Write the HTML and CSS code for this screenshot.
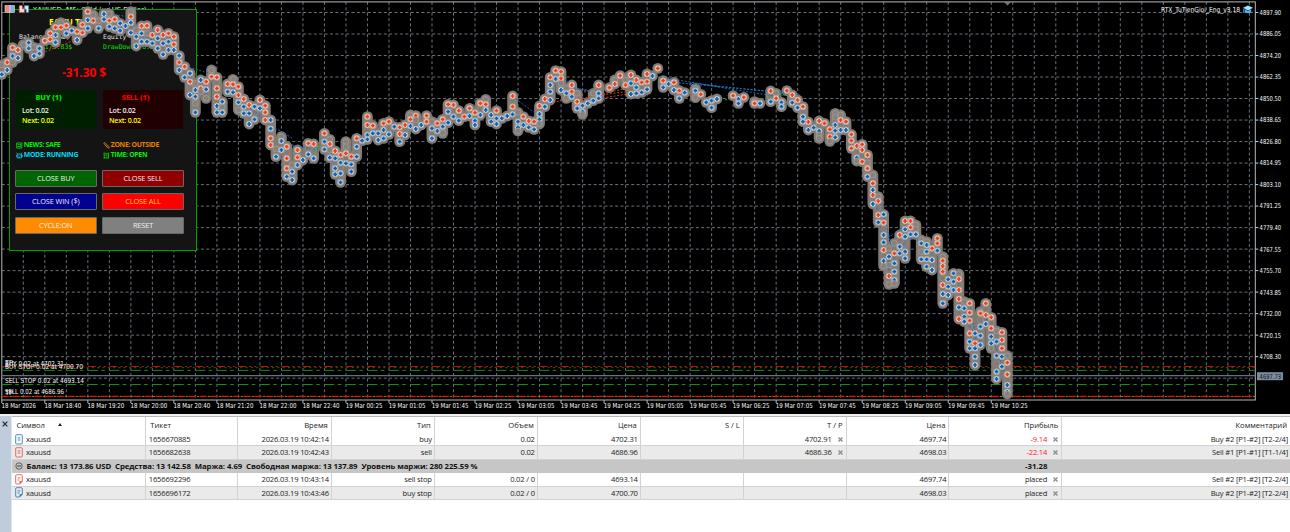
FILE: index.html
```html
<!DOCTYPE html>
<html lang="ru">
<head>
<meta charset="utf-8">
<title>XAUUSD, M5</title>
<link rel="stylesheet" href="styles.css">
</head>
<body>
<div class="terminal">
  <section class="chart">
    <svg class="layer" id="grid" width="1290" height="414"></svg>
    <div class="panel">
      <div class="panel-title">EA TU TIEN</div>
      <div class="pair mono"><span>Balance (USD)</span><span>Equity (USD)</span></div>
      <div class="pair mono green"><span class="balance-value">13173.83$</span><span>DrawDown: 0.2%</span></div>
      <div class="profit">-31.30 $</div>
      <div class="sides">
        <div class="side side-buy"><b>BUY (1)</b><span>Lot: 0.02</span><span class="next">Next: 0.02</span></div>
        <div class="side side-sell"><b>SELL (1)</b><span>Lot: 0.02</span><span class="next">Next: 0.02</span></div>
      </div>
      <div class="status">
        <span class="lime"><svg width="7" height="7" viewBox="0 0 7 7"><path d="M.7 1h5.1v5.1H.7zM1.7 2.5h2M1.7 4.5h3M4.7 2v2" /></svg>NEWS: SAFE</span>
        <span class="orange"><svg width="7" height="7" viewBox="0 0 7 7"><path d="M.7 1.2l1.4-.5L6 4.8l.1 1.4-1.4-.3zM2 2.6l2.5 2.6" /></svg>ZONE: OUTSIDE</span>
        <span class="cyan"><svg width="7" height="7" viewBox="0 0 7 7"><path d="M1.2 2.1h4.3v3.8H1.2zM.5.8l1.4 1.3M6.2.8L4.8 2.1M.3 3v2M6.3 3v2M2.3 3.4h.6M4 3.4h.6M2.3 5h2" /></svg>MODE: RUNNING</span>
        <span class="lime"><svg width="7" height="7" viewBox="0 0 7 7"><path d="M1.2 1.8h4.2v4.1H1.2zM.4 1.5L1.5.6M6.2 1.5L5.1.6M3.3 2.6v1.5h1M1 6.6l.6-.7M5.6 6.6L5 5.9" /></svg>TIME: OPEN</span>
      </div>
      <div class="buttons">
        <button class="btn b-green">CLOSE BUY</button><button class="btn b-maroon">CLOSE SELL</button>
        <button class="btn b-navy">CLOSE WIN ($)</button><button class="btn b-red">CLOSE ALL</button>
        <button class="btn b-orange">CYCLE:ON</button><button class="btn b-gray">RESET</button>
      </div>
    </div>
    <svg class="layer" id="deals" width="1290" height="414"></svg>
  </section>

  <section class="toolbox">
    <div class="strip"><svg width="6" height="6" viewBox="0 0 6 6"><path d="M.7.7l4.6 4.6M5.3.7L.7 5.3" stroke="#222" stroke-width="1.2"/></svg></div>
    <div class="table">
      <div class="row head">
        <span class="l">Символ<i class="sort"></i></span><span class="l">Тикет</span><span>Время</span><span>Тип</span><span>Объем</span><span>Цена</span><span>S / L</span><span>T / P</span><span>Цена</span><span>Прибыль</span><span>Комментарий</span>
      </div>
      <div class="row">
        <span class="l sym"><svg class="doc blue" width="8" height="11" viewBox="0 0 8 11"><rect x=".7" y=".7" width="6.6" height="9.3" rx="1"/><path d="M2.6 3.9h2.8M2.6 6h2.8"/></svg>xauusd</span><span class="l">1656670885</span><span>2026.03.19 10:42:14</span><span>buy</span><span>0.02</span><span>4702.31</span><span></span><span>4702.91<svg class="x" viewBox="0 0 5 5"><path d="M.5.5l4 4M4.5.5l-4 4"/></svg></span><span>4697.74</span><span class="loss">-9.14<svg class="x" viewBox="0 0 5 5"><path d="M.5.5l4 4M4.5.5l-4 4"/></svg></span><span>Buy #2 [P1-#2] [T2-2/4]</span>
      </div>
      <div class="row alt">
        <span class="l sym"><svg class="doc red" width="8" height="11" viewBox="0 0 8 11"><rect x=".7" y=".7" width="6.6" height="9.3" rx="1"/><path d="M2.6 3.9h2.8M2.6 6h2.8"/></svg>xauusd</span><span class="l">1656682638</span><span>2026.03.19 10:42:43</span><span>sell</span><span>0.02</span><span>4686.96</span><span></span><span>4686.36<svg class="x" viewBox="0 0 5 5"><path d="M.5.5l4 4M4.5.5l-4 4"/></svg></span><span>4698.03</span><span class="loss">-22.14<svg class="x" viewBox="0 0 5 5"><path d="M.5.5l4 4M4.5.5l-4 4"/></svg></span><span>Sell #1 [P1-#1] [T1-1/4]</span>
      </div>
      <div class="summary">
        <svg width="8" height="8" viewBox="0 0 8 8"><circle cx="4" cy="4" r="3.2" fill="none" stroke="#444" stroke-width=".8"/><path d="M2.2 4h3.6" stroke="#333"/></svg>
        <span class="totals">Баланс: 13 173.86 USD&nbsp; Средства: 13 142.58&nbsp; Маржа: 4.69&nbsp; Свободная маржа: 13 137.89&nbsp; Уровень маржи: 280 225.59 %</span>
        <span class="net">-31.28</span>
      </div>
      <div class="row">
        <span class="l sym"><svg class="doc red" width="8" height="11" viewBox="0 0 8 11"><path d="M4.5 10H1.7a1 1 0 0 1-1-1V1.7a1 1 0 0 1 1-1h4.6a1 1 0 0 1 1 1v5.5z"/><path d="M2.6 3.9h2.8M2.6 6h1.8"/><path class="fold" d="M4.6 10V7.2h3z"/></svg>xauusd</span><span class="l">1656692296</span><span>2026.03.19 10:43:14</span><span>sell stop</span><span>0.02 / 0</span><span>4693.14</span><span></span><span></span><span>4697.74</span><span>placed<svg class="x" viewBox="0 0 5 5"><path d="M.5.5l4 4M4.5.5l-4 4"/></svg></span><span>Sell #2 [P1-#2] [T2-2/4]</span>
      </div>
      <div class="row alt">
        <span class="l sym"><svg class="doc blue" width="8" height="11" viewBox="0 0 8 11"><path d="M4.5 10H1.7a1 1 0 0 1-1-1V1.7a1 1 0 0 1 1-1h4.6a1 1 0 0 1 1 1v5.5z"/><path d="M2.6 3.9h2.8M2.6 6h1.8"/><path class="fold" d="M4.6 10V7.2h3z"/></svg>xauusd</span><span class="l">1656696172</span><span>2026.03.19 10:43:46</span><span>buy stop</span><span>0.02 / 0</span><span>4700.70</span><span></span><span></span><span>4698.03</span><span>placed<svg class="x" viewBox="0 0 5 5"><path d="M.5.5l4 4M4.5.5l-4 4"/></svg></span><span>Buy #2 [P1-#2] [T2-2/4]</span>
      </div>
    </div>
  </section>
</div>
<script src="chart.js"></script>
</body>
</html>
```

FILE: styles.css
```css
* { box-sizing: border-box; }
body { margin: 0; background: #fff; overflow: hidden; font-family: "Open Sans", "Noto Sans", sans-serif; }
.terminal { width: 1290px; height: 532px; display: flex; flex-direction: column; }

.chart { position: relative; height: 414px; flex: none; background: #000; padding: 9px; }
.layer { position: absolute; left: 0; top: 0; }
.layer text { font-family: "DejaVu Sans Condensed", "DejaVu Sans", sans-serif; font-size: 6.8px; fill: #f4f4f4; }

.panel { position: relative; width: 188px; height: 242px; background: #141414; border: 1px solid #00a000; padding: 0 12px 0 5px; line-height: 10px; font-size: 7.1px; color: #eee; }
.panel-title { margin-top: 7px; padding-left: 34px; font-size: 8.4px; font-weight: 700; color: #ff0; }
.pair { display: grid; grid-template-columns: 84px 1fr; padding-left: 4px; }
.mono { font-family: "DejaVu Sans Mono", monospace; font-size: 6.5px; color: #e0e0e0; }
.mono:nth-child(2) { margin-top: 5px; }
.mono.green { color: #00e000; }
.balance-value { padding-left: 18px; }
.profit { margin-top: 13px; padding-right: 31px; text-align: center; font-size: 12px; line-height: 16px; font-weight: 700; color: #f00; letter-spacing: -.1px; }
.sides { display: grid; grid-template-columns: 80px 80px; gap: 7px; margin: 9px 0 0 1px; font-weight: 600; letter-spacing: -.25px; }
.side { height: 39px; padding: 2px 6px; display: flex; flex-direction: column; }
.side b { text-align: center; padding-right: 15px; margin-bottom: 3px; font-size: 7.3px; letter-spacing: -.1px; }
.side-buy { background: #001e00; }
.side-buy b { color: #00e000; }
.side-sell { background: #200000; }
.side-sell b { color: #e80000; }
.next { color: #ff0; }
.status { display: grid; grid-template-columns: 87px 1fr; margin-top: 10.5px; font-weight: 700; font-size: 6.9px; letter-spacing: -.33px; white-space: nowrap; }
.status svg { fill: none; stroke: currentColor; stroke-width: .8; vertical-align: -2px; margin: 0 1px 0 .8px; }
.lime { color: #00f000; }
.orange { color: #e88000; }
.cyan { color: #00d8f0; }
.buttons { display: grid; grid-template-columns: 81.5px 81.5px; column-gap: 5.8px; row-gap: 6.4px; margin-top: 10px; }
.btn { height: 17.3px; padding: 0; border: 1px solid #686868; border-radius: 1px; font: 7.3px/15px "Open Sans", sans-serif; color: #f0f0f0; letter-spacing: -.08px; }
.b-green { background: #006400; }
.b-maroon { background: #900000; }
.b-navy { background: #000090; }
.b-red { background: #f00; color: #ffdf20; }
.b-orange { background: #ff8c00; }
.b-gray { background: #808080; }

.toolbox { flex: 1; display: flex; border-top: 2px solid #f0f0f0; }
.strip { width: 12px; background: #bfccdb; border-right: 1px solid #dfe5ec; padding: 5px 0 0 2px; }
.strip svg { display: block; }
.table { flex: 1; border-top: 1px solid #b8b8b8; font-size: 7.6px; letter-spacing: -.18px; color: #1c1c1c; }
.row { display: grid; grid-template-columns: 133.8px 92px 94px 103px 103px 103px 103px 102.8px 102.8px 112.8px 1fr; height: 13.45px; line-height: 12.6px; border-bottom: 1px solid #d2d2d2; }
.row > span { border-right: 1px solid #d2d2d2; padding-right: 2px; text-align: right; white-space: nowrap; }
.row > span:last-child { border-right: 0; }
.row > .l { text-align: left; padding-left: 3px; }
.row.head { height: 16px; line-height: 16.4px; border-bottom: 0; letter-spacing: 0; }
.row.head > span { padding-right: 3px; }
.row.head > .l { padding-left: 4.5px; }
.alt { background: #eaeaea; }
.row > .sym { display: flex; align-items: center; gap: 3px; }
.doc { fill: none; stroke-width: .9; }
.doc.blue { stroke: #2c80b8; }
.doc.red { stroke: #e85c52; }
.doc .fold { stroke: none; }
.blue .fold { fill: #1c70a8; }
.red .fold { fill: #e03c30; }
.sort { display: inline-block; margin-left: 13px; vertical-align: 2px; border: 2.5px solid transparent; border-top: 0; border-bottom: 3px solid #222; }
.x { display: inline-block; width: 5px; height: 5px; margin: 0 1px 0 6px; fill: none; stroke: #858585; stroke-width: 1.1; }
.row > .loss { color: #ff2030; }
.summary { display: flex; align-items: center; height: 13.3px; line-height: 12px; padding: 0 0 1px 2.5px; background: #c6c6c6; color: #111; font-weight: 700; white-space: nowrap; }
.totals { margin-left: 4px; width: 993px; font-size: 7.8px; letter-spacing: -.08px; }
.net { width: 28px; text-align: right; font-size: 7.8px; letter-spacing: 0; }
```

FILE: chart.js
```js
const NS = 'http://www.w3.org/2000/svg';
const grid = document.getElementById('grid');
const deals = document.getElementById('deals');

function add(parent, tag, attrs, text) {
  const el = document.createElementNS(NS, tag);
  for (const k in attrs) el.setAttribute(k, attrs[k]);
  if (text) el.textContent = text;
  parent.appendChild(el);
  return el;
}
function label(parent, x, y, width, text, attrs) {
  return add(parent, 'text', Object.assign({ x, y, textLength: width, lengthAdjust: 'spacingAndGlyphs' }, attrs), text);
}
function line(parent, x1, y1, x2, y2, stroke, dash, w) {
  const a = { x1, y1, x2, y2, stroke, 'stroke-width': w || 1 };
  if (dash) a['stroke-dasharray'] = dash;
  return add(parent, 'line', a);
}

const LEFT = 1.8, RIGHT = 1255.3, TOP = 1.9, BOTTOM = 400, STEP = 21.51;

for (let i = 1; i < 59; i++) line(grid, LEFT + i * STEP, TOP, LEFT + i * STEP, BOTTOM, '#66717d', '3 2.38', 1);
for (let i = 0; i < 18; i++) line(grid, LEFT, 12.5 + i * STEP, RIGHT, 12.5 + i * STEP, '#66717d', '3 2.38', 1);
add(grid, 'rect', { x: LEFT, y: TOP, width: RIGHT - LEFT, height: BOTTOM - TOP, fill: 'none', stroke: '#b8b8b8', 'stroke-width': 1 });
add(grid, 'path', { d: 'M1004 2h7l-3.5 3.5z', fill: '#777' });

for (let i = 0; i < 17; i++) {
  const y = 12.5 + i * STEP;
  line(grid, RIGHT, y, RIGHT + 3, y, '#ccc');
  label(grid, 1259.6, y + 2.4, 21.6, (4897.9 - i * 11.85).toFixed(2));
}

const axis = ['18 Mar 2026', '18 Mar 18:40', '18 Mar 19:20', '18 Mar 20:00', '18 Mar 20:40', '18 Mar 21:20', '18 Mar 22:00', '18 Mar 22:40', '19 Mar 00:25', '19 Mar 01:05', '19 Mar 01:45', '19 Mar 02:25', '19 Mar 03:05', '19 Mar 03:45', '19 Mar 04:25', '19 Mar 05:05', '19 Mar 05:45', '19 Mar 06:25', '19 Mar 07:05', '19 Mar 07:45', '19 Mar 08:25', '19 Mar 09:05', '19 Mar 09:45', '19 Mar 10:25'];
axis.forEach((t, i) => {
  const x = LEFT + i * 43.02;
  line(grid, x, BOTTOM, x, BOTTOM + 3, '#bbb');
  label(grid, x - 0.3, 408.4, i ? 36.8 : 34.5, t);
});

/* symbol caption and expert name */
label(grid, 32.5, 11.5, 114, 'XAUUSD, M5: Gold (vs US Dollar)');
label(grid, 1161, 11.6, 79, 'RTX_TuTienGioi_Eng_v3.18');
add(grid, 'path', { d: 'M1243 7.8l5-2.4 5 2.4-5 2.6z', fill: '#a8e2ff' });
add(grid, 'path', { d: 'M1244.8 9.3l3.2 1.6 3.2-1.6v3q-3.2 1.8-6.4 0z', fill: '#4fb2f0' });
add(grid, 'path', { d: 'M1243.8 8.5v4.4', stroke: '#1e88e5', 'stroke-width': 1.4 });

/* order levels */
line(grid, LEFT, 366.5, RIGHT, 366.5, '#e00000', '8 3 2 3 2 3.5', 1.1);
line(grid, LEFT, 367.7, RIGHT, 367.7, '#0a8a0a', '2 3.3', 0.9);
line(grid, LEFT, 370.4, RIGHT, 370.4, '#0d8f14', '10 3.5 3.5 4.5', 1);
line(grid, LEFT, 375.6, RIGHT, 375.6, '#657080', null, 1.1);
line(grid, LEFT, 384.5, RIGHT, 384.5, '#0d8f14', '10 3.5 3.5 4.5', 1);
line(grid, LEFT, 396.4, RIGHT, 396.4, '#d81800', '7 4', 1.2);
line(grid, LEFT + 8, 396.4, RIGHT, 396.4, '#ad7a10', '2.5 8.5', 1);
add(grid, 'rect', { x: 1257, y: 372.2, width: 26, height: 8, fill: '#7c8c9e' });
label(grid, 1259.6, 378.6, 21.6, '4697.73', { style: 'fill:#10161c' });
label(grid, 5, 365.8, 59, 'BUY 0.02 at 4702.31');
label(grid, 5, 365.2, 8, 'TP');
label(grid, 5, 368.8, 78, 'BUY STOP 0.02 at 4700.70');
label(grid, 5, 382.8, 79, 'SELL STOP 0.02 at 4693.14');
label(grid, 5, 394.4, 59, 'SELL 0.02 at 4686.96');
label(grid, 5, 394.8, 8, 'TP');

/* window icons in the chart corner */
add(deals, 'rect', { x: 5, y: 5.5, width: 5, height: 7, fill: '#e98a82', stroke: '#e8d8d8', 'stroke-width': .6 });
add(deals, 'rect', { x: 10, y: 5.5, width: 4.5, height: 7, fill: '#7fb3dc', stroke: '#d8e4ee', 'stroke-width': .6 });
add(deals, 'path', { d: 'M19.2 5.6h3.2v3.2h2v3.6h-5.2z', fill: '#f3dedb', stroke: '#d34d40', 'stroke-width': .7 });
add(deals, 'path', { d: 'M24.3 5.6h4.4v6.8h-2.6V9.2h-1.8z', fill: '#dceaf5', stroke: '#2a6ea8', 'stroke-width': .7 });

/* Deal marks per bar. Heights are in thirds of a pixel below the group's top; r = sell, b = buy. */
const groups = [
  { first: 0, top: 0, bars: `195 223b|187r 210b|143r 168b 187|150r 174b|134|128b 145b|142 168b|145b 161b|122r|100r 118r|82r 105b 127b|68 82r|77r 100b|92b|95r 120b|74r 98r|35r 60b 85b|45 62r|62 85b|42b 58b|42 62r 80b|58r 85b|70b 92b|78b|35 50r 68b 98b|90 110b 138b|78r 100b 125b|77r 100 125b|105r 130b|90r 115b 145b|105r 130b 163b|100r 125b 150b|110r 133r 150b|167b 187r 210b|200r 232b` },
  { first: 35, top: 50, bars: `70b 95r 135b|100 120b 140b 160 187b|90b 115r 125|95r 118b 145|60 80r|82r 115r 140r 168b 187b|155b 172 187b|102r 125b|88 103r 127b|110r 135r 157b 180|147r 170b 190b|165r 190b 222b|170b 208b|150r 175b|167r 187r 210r|210b 236b 265r 285r|297 320b|260 273b 300b|290r 325r 355r 380b|345 365b 390b|300r 322r 345b|330b|280r 313b|282r 325b||250r 275b 298b|268 282r 300 323b|303r 325b 355b 373b|315r 338b 370b 397b|275 290 310r 340b|320r 343b 365b|265r 290b 320b|272b|200r 225r 255b 268b|227r 250b|250b 270b|220r 240b 265b|215r 253b|230b|232r 252r 275b|225r 255b|195 208r 228b|197r 210 237b|225b|197r 215r|215 235b 265b|220r 243b` },
  { first: 82, top: 50, bars: `208r 230b 250|163r 185b 218b|165r 200b|182r 212b|200r|175r 198b|188r 212b 225b|160r 195b|148 163r 180b|195b 215b|182r 205b 222b|205b|198b|138r 170r 193b|187 215b 232b 243|200r 225b|213r 232b|215r 238b|168r 192b 208b 222|147r 170b|82r 105b 125b 150b|62r 87b|65r 85r 100 120b|115 130b 145|105r 125r 140b|130 155r 175b|167b 185b 193|160b|130 152b|105r 130b 145b||113r|90 102r|77r|90 105r|75r 100b 132b|90r 112b 130b|97r 127b|72r 95r 118b|78b|55r|92r 112b|102b|97r 120b|122r 145b|128b||115 122b 143|133r|157b|152b 173b|147b` },
  { first: 136, top: 60, bars: `107r|117b 130b|112r||125 130r|130b||93r 125b|100 115r|127b 140b|92r|105r 128b|120r 143b|140r 170b 185b|186r 210b|203b|183r 213b 225 235|190r|208r 230r 244|160 172 195b 212b 232b|165 180r 210b|185r 210b|223r 242r 265r|258r 293b 303|253r 270r 305r|285r 308 325r 350b` },
  { first: 162, top: 190, bars: `-45 -20r 0b 15r 42b|20 33r 75r 97b|73b 98r 135b 157b 180r 213b 228|175 200b 225 258r 283|160 190r 220b 245b 270b 280|135r 170b 190b|93r 118b 140b 185b 205b|93r 112r 133b|105 118 133b|150 160b 185 208b|155 165b 185b 208b 230b|175r 210b 240b|145r 160r 182b|200 212r 228r 245r 285r 312b 340b|268b 290b 315b|250b 275b 300b|252 267r 300r 327r 352b 387r|335 355b 380b 395b|340r 368r 392r 430r 455b 475b|430b 460r 475b 500b 525b|365 370r 410b 437b 465b|340r 375r 402b|382r 415r 440b 460b 475|423 455b 497b 545b 567b|427r 450r 475r 500b 530b|497 518r 553r 585b 606b 612` }
];

const rails = add(deals, 'g', { stroke: '#827b75', 'stroke-linecap': 'round' });
const links = add(deals, 'g', { 'stroke-dasharray': '2 1.6' });
const marks = add(deals, 'g', {});

for (const g of groups) {
  g.bars.split('|').forEach((bar, i) => {
    if (!bar) return;
    const x = LEFT + (g.first + i) * 5.377;
    const pts = bar.split(' ').map(p => ({ y: g.top + parseFloat(p) / 3, side: p.slice(-1) }));
    let from = pts[0].y;
    pts.forEach((p, n) => {
      const next = pts[n + 1];
      if (!next || next.y - p.y > 17) {
        line(rails, x, from, x, p.y + 0.01, '#827b75', null, 10.8);
        if (next) from = next.y;
      } else if (next.y - p.y > 5) {
        add(marks, 'circle', { cx: x, cy: (p.y + next.y) / 2, r: 3, fill: 'none', stroke: '#9b938c', 'stroke-width': .5 });
      }
    });
    pts.forEach(p => {
      const colored = p.side === 'r' || p.side === 'b';
      if (!colored) {
        add(marks, 'circle', { cx: x, cy: p.y, r: 2.9, fill: '#88807a', stroke: '#aca49d', 'stroke-width': .6 });
        return;
      }
      const c = p.side === 'r' ? '#f03c14' : '#0a5fb2';
      add(marks, 'circle', { cx: x, cy: p.y, r: 3, fill: '#dedcd9', stroke: p.side === 'r' ? '#bd9a8d' : '#949da6', 'stroke-width': .7 });
      add(marks, 'path', { d: `M${x - 1.9} ${p.y}h3.8M${x} ${p.y - 1.9}v3.8`, stroke: c, 'stroke-width': 1.7 });
    });
  });
}

/* open-to-close connectors */
[
  [42, 53, 80, 38, 'r'], [100, 12, 135, 18, 'b'], [182, 65, 208, 73, 'b'], [275, 128, 292, 138, 'b'], [292, 145, 318, 150, 'b'],
  [513, 97, 535, 113, 'b'], [558, 76, 575, 85, 'b'], [560, 88, 600, 91, 'b'], [570, 86, 598, 94, 'b'], [550, 104, 590, 90, 'r'], [575, 100, 628, 88, 'r'], [578, 102, 640, 92, 'r'], [592, 96, 632, 91, 'r'],
  [660, 77, 720, 87, 'b'], [668, 82, 790, 93, 'b'], [690, 83, 800, 95, 'b'], [700, 84, 780, 97, 'b'], [725, 100, 745, 96, 'g'], [765, 100, 787, 94, 'g'], [317, 153, 319, 144, 'g'], [655, 76, 660, 72, 'g'],
  [876, 205, 890, 275, 'b'], [880, 200, 895, 260, 'b'], [885, 240, 902, 228, 'b'], [888, 262, 915, 230, 'b'], [910, 238, 932, 244, 'b'], [965, 320, 985, 348, 'b'], [985, 315, 1004, 372, 'b'], [970, 305, 978, 350, 'b'], [945, 285, 960, 292, 'b'], [120, 27, 165, 45, 'b'], [135, 35, 160, 30, 'b'], [250, 108, 268, 122, 'b']
].forEach(([x1, y1, x2, y2, s]) => line(links, x1, y1, x2, y2, { r: '#c8401e', b: '#1a6cb6', g: '#0f9d20' }[s], null, 1));
```
